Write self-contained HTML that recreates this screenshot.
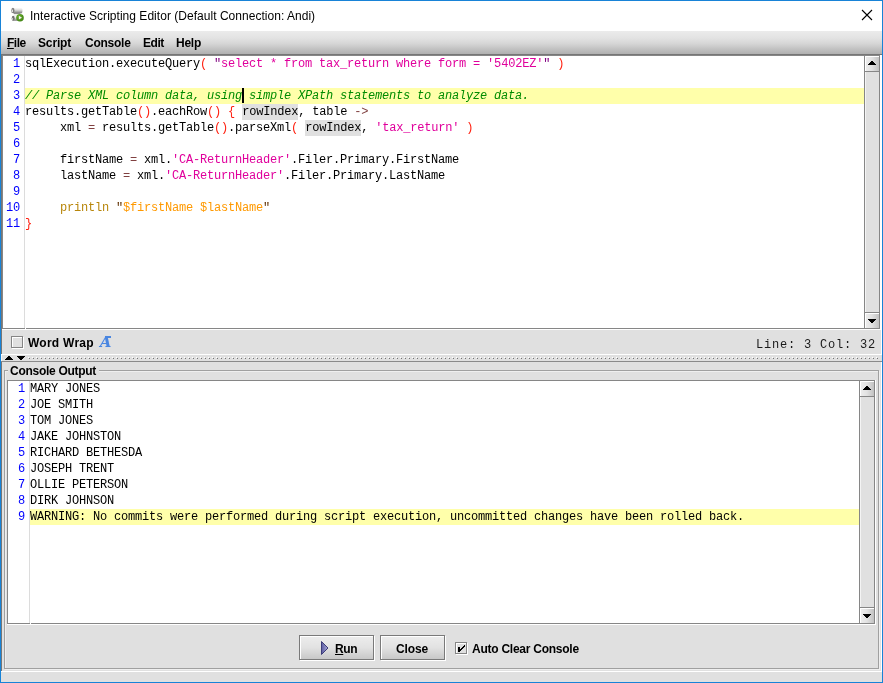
<!DOCTYPE html>
<html>
<head>
<meta charset="utf-8">
<title>Interactive Scripting Editor</title>
<style>
html,body{margin:0;padding:0;}
body{width:883px;height:683px;overflow:hidden;background:#e0e0e0;position:relative;
  font-family:"Liberation Sans",sans-serif;font-size:12px;color:#000;}
.abs{position:absolute;}
#win{position:absolute;left:0;top:0;width:881px;height:681px;border:1px solid #1883d7;background:#e0e0e0;}
#root{position:absolute;left:0;top:0;width:883px;height:683px;will-change:transform;}
#titlebar{left:1px;top:1px;width:881px;height:30px;background:#fff;}
#title{left:30px;top:8px;font-size:12px;line-height:16px;white-space:nowrap;color:#000;letter-spacing:0.03px;}
#menubar{left:1px;top:31px;width:881px;height:23px;background:linear-gradient(#ebebeb 0%,#e3e3e3 30%,#d6d6d6 55%,#c2c2c2 78%,#b0b0b0 100%);}
.lbl{font-weight:bold;font-size:12px;line-height:15px;white-space:nowrap;}
.mono{font-family:"Liberation Mono",monospace;font-size:12px;letter-spacing:-0.2px;line-height:16px;white-space:pre;}
.ln{color:#0000ff;text-align:right;}
.hl{background:#ffffaa;}
.p{color:#ff2010;}
.s{color:#e0009c;}
.q{color:#800080;}
.s2{color:#e0009c;}
.c{color:#008c00;font-style:italic;}
.o{color:#804040;}
.k{color:#b8860b;}
.g{color:#ff9900;}
.gq{color:#603000;}
.m{background:#e0e0e0;display:inline-block;height:16px;line-height:16px;vertical-align:top;}
.btn{border:1px solid #7a7a7a;box-sizing:border-box;background:linear-gradient(#ededed 0%,#e2e2e2 50%,#c8c8c8 100%);box-shadow:inset 1px 1px 0 #fff, 1px 1px 0 #fff;}
.cb{box-sizing:border-box;width:12px;height:12px;border:1px solid #858585;background:#e0e0e0;box-shadow:inset 1px 1px 0 #fff, 1px 1px 0 #fff;}
</style>
</head>
<body>
<div id="win"></div>
<div id="root">
  <!-- title bar -->
  <div id="titlebar" class="abs"></div>
  <svg class="abs" style="left:6px;top:4px" width="24" height="22" viewBox="6 4 24 22">
    <defs>
      <linearGradient id="sg" x1="0" x2="0" y1="0" y2="1"><stop offset="0" stop-color="#fdfdfd"/><stop offset="0.4" stop-color="#dcdcdc"/><stop offset="1" stop-color="#787878"/></linearGradient>
      <radialGradient id="gg" cx="0.4" cy="0.35" r="0.7"><stop offset="0" stop-color="#6cb030"/><stop offset="1" stop-color="#3f8212"/></radialGradient>
    </defs>
    <rect x="12.2" y="7.8" width="10.2" height="5.6" rx="1.6" fill="url(#sg)"/>
    <ellipse cx="12.9" cy="10.4" rx="1.6" ry="2.7" fill="#7e7e7e"/>
    <ellipse cx="12.4" cy="10.9" rx="0.6" ry="1.3" fill="#e8e8e8"/>
    <rect x="14" y="12.4" width="6" height="1.6" fill="#8e8e8e"/>
    <rect x="14" y="14" width="6" height="3" fill="#efefef"/>
    <rect x="11.8" y="16.2" width="6.4" height="4.6" rx="1.5" fill="url(#sg)"/>
    <ellipse cx="13.2" cy="18.2" rx="1.4" ry="2.4" fill="#707070"/>
    <ellipse cx="12.6" cy="18.9" rx="0.5" ry="1.1" fill="#e0e0e0"/>
    <circle cx="20" cy="17.7" r="3.8" fill="url(#gg)"/>
    <path d="M18.9 15.8 L22 17.7 L18.9 19.6 Z" fill="#f4f0fa"/>
  </svg>
  <div id="title" class="abs">Interactive Scripting Editor (Default Connection: Andi)</div>
  <svg class="abs" style="left:861px;top:9px" width="12" height="12" viewBox="0 0 12 12"><path d="M1 1 L11 11 M11 1 L1 11" stroke="#000" stroke-width="1.1" fill="none"/></svg>

  <!-- menu bar -->
  <div id="menubar" class="abs"></div>
  <div class="abs lbl" style="left:7px;top:36px;letter-spacing:-0.5px"><u>F</u>ile</div>
  <div class="abs lbl" style="left:38px;top:36px;letter-spacing:-0.15px">Script</div>
  <div class="abs lbl" style="left:85px;top:36px;letter-spacing:-0.25px">Console</div>
  <div class="abs lbl" style="left:143px;top:36px;letter-spacing:-0.45px">Edit</div>
  <div class="abs lbl" style="left:176px;top:36px;letter-spacing:-0.25px">Help</div>

  <!-- content bevel -->
  <div class="abs" style="left:1px;top:54px;width:881px;height:1px;background:#767676;"></div>
  <div class="abs" style="left:1px;top:54px;width:1px;height:617px;background:#767676;"></div>
  <div class="abs" style="left:881px;top:55px;width:1px;height:617px;background:#fff;"></div>
  <div class="abs" style="left:1px;top:671px;width:881px;height:1px;background:#fff;"></div>
  <!-- editor -->
  <div class="abs" style="left:2px;top:55px;width:879px;height:275px;background:#fff;"></div>
  <div class="abs" style="left:2px;top:55px;width:878px;height:274px;background:#868686;"></div>
  <div class="abs" style="left:3px;top:56px;width:861px;height:272px;background:#fff;"></div>
  <div class="abs" style="left:24px;top:56px;width:1px;height:272px;background:#dcdcdc;"></div>
  <div class="abs" style="left:25px;top:88px;width:839px;height:16px;background:#ffffaa;"></div>
  <div class="abs mono ln" style="left:3px;top:56px;width:17px">1</div>
  <div class="abs mono" style="left:25px;top:56px">sqlExecution.executeQuery<span class="p">(</span> <span class="q">"</span><span class="s">select * from tax_return where form = '5402EZ'</span><span class="q">"</span> <span class="p">)</span></div>
  <div class="abs mono ln" style="left:3px;top:72px;width:17px">2</div>
  <div class="abs mono ln" style="left:3px;top:88px;width:17px">3</div>
  <div class="abs mono" style="left:25px;top:88px"><span class="c">// Parse XML column data, using simple XPath statements to analyze data.</span></div>
  <div class="abs mono ln" style="left:3px;top:104px;width:17px">4</div>
  <div class="abs mono" style="left:25px;top:104px">results.getTable<span class="p">()</span>.eachRow<span class="p">()</span> <span class="p">{</span> <span class="m">rowIndex</span>, table <span class="o">-&gt;</span></div>
  <div class="abs mono ln" style="left:3px;top:120px;width:17px">5</div>
  <div class="abs mono" style="left:25px;top:120px">     xml <span class="o">=</span> results.getTable<span class="p">()</span>.parseXml<span class="p">(</span> <span class="m">rowIndex</span>, <span class="s">'tax_return'</span> <span class="p">)</span></div>
  <div class="abs mono ln" style="left:3px;top:136px;width:17px">6</div>
  <div class="abs mono ln" style="left:3px;top:152px;width:17px">7</div>
  <div class="abs mono" style="left:25px;top:152px">     firstName <span class="o">=</span> xml.<span class="s2">'CA-ReturnHeader'</span>.Filer.Primary.FirstName</div>
  <div class="abs mono ln" style="left:3px;top:168px;width:17px">8</div>
  <div class="abs mono" style="left:25px;top:168px">     lastName <span class="o">=</span> xml.<span class="s2">'CA-ReturnHeader'</span>.Filer.Primary.LastName</div>
  <div class="abs mono ln" style="left:3px;top:184px;width:17px">9</div>
  <div class="abs mono ln" style="left:3px;top:200px;width:17px">10</div>
  <div class="abs mono" style="left:25px;top:200px">     <span class="k">println</span> <span class="gq">"</span><span class="g">$firstName $lastName</span><span class="gq">"</span></div>
  <div class="abs mono ln" style="left:3px;top:216px;width:17px">11</div>
  <div class="abs mono" style="left:25px;top:216px"><span class="p">}</span></div>
  <div class="abs" style="left:242px;top:88px;width:2px;height:15px;background:#000;"></div>
  <div class="abs" style="left:25px;top:328px;width:1px;height:1px;background:#fff;"></div>
  <div class="abs" style="left:864px;top:56px;width:1px;height:272px;background:#868686;"></div>
  <div class="abs" style="left:879px;top:56px;width:1px;height:272px;background:#868686;"></div>
  <div class="abs" style="left:865px;top:56px;width:14px;height:272px;background:#e0e0e0;"></div>
  <div class="abs" style="left:865px;top:56px;width:1px;height:272px;background:#f4f4f4;"></div>
  <div class="abs" style="left:865px;top:56px;width:14px;height:15px;background:#fff;"></div>
  <div class="abs" style="left:866px;top:57px;width:13px;height:14px;background:linear-gradient(90deg,#ececec 0%,#e2e2e2 45%,#c2c2c2 100%);"></div>
  <div class="abs" style="left:865px;top:71px;width:14px;height:1px;background:#868686;"></div>
  <svg class="abs" style="left:868px;top:61px" width="8" height="4" viewBox="0 0 8 4" shape-rendering="crispEdges"><path d="M3 0h2v1h1v1h1v1h1v1h-8v-1h1v-1h1v-1h1z" fill="#000"/></svg>
  <div class="abs" style="left:865px;top:312px;width:14px;height:1px;background:#868686;"></div>
  <div class="abs" style="left:865px;top:313px;width:14px;height:15px;background:#fff;"></div>
  <div class="abs" style="left:866px;top:314px;width:13px;height:14px;background:linear-gradient(90deg,#ececec 0%,#e2e2e2 45%,#c2c2c2 100%);"></div>
  <svg class="abs" style="left:868px;top:319px" width="8" height="4" viewBox="0 0 8 4" shape-rendering="crispEdges"><path d="M0 0h8v1h-1v1h-1v1h-1v1h-2v-1h-1v-1h-1v-1h-1z" fill="#000"/></svg>
  <!-- word wrap panel -->
  <div class="abs cb" style="left:11px;top:336px"></div>
  <div class="abs lbl" style="left:28px;top:336px;letter-spacing:0.25px">Word Wrap</div>
  <div class="abs" style="left:100px;top:333px;font-family:'DejaVu Serif',serif;font-style:italic;font-weight:bold;font-size:14.5px;line-height:18px;color:#4a86e0;text-shadow:0 0 1px #a8c4f0">A</div>
  <div class="abs" style="left:105px;top:336px;width:6px;height:2px;background:#4a86e0;"></div>
  <div class="abs" style="left:756px;top:337px;font-family:'Liberation Mono',monospace;font-size:12px;letter-spacing:0.8px;line-height:16px;white-space:pre;color:#1a1a1a">Line: 3 Col: 32</div>
  <!-- divider -->
  <div class="abs" style="left:1px;top:354px;width:881px;height:1px;background:#fff;"></div>
  <div class="abs" style="left:1px;top:355px;width:881px;height:6px;background:#e0e0e0;"></div>
  <div class="abs" style="left:1px;top:355px;width:1px;height:6px;background:#f6f6f6;"></div>
  <div class="abs" style="left:1px;top:361px;width:881px;height:1px;background:#8a8a8a;"></div>
  <svg class="abs" style="left:5px;top:356px" width="8" height="4" viewBox="0 0 8 4" shape-rendering="crispEdges"><path d="M3 0h2v1h1v1h1v1h1v1h-8v-1h1v-1h1v-1h1z" fill="#000"/></svg>
  <svg class="abs" style="left:17px;top:356px" width="8" height="4" viewBox="0 0 8 4" shape-rendering="crispEdges"><path d="M0 0h8v1h-1v1h-1v1h-1v1h-2v-1h-1v-1h-1v-1h-1z" fill="#000"/></svg>
  <div class="abs" style="left:29px;top:358px;width:850px;height:1px;background:repeating-linear-gradient(90deg,#747474 0,#747474 1px,transparent 1px,transparent 4px)"></div>
  <div class="abs" style="left:28px;top:357px;width:850px;height:1px;background:repeating-linear-gradient(90deg,#fff 0,#fff 1px,transparent 1px,transparent 4px)"></div>
  <!-- console group -->
  <div class="abs" style="left:5px;top:371px;width:873px;height:297px;border:1px solid #efefef"></div>
  <div class="abs" style="left:4px;top:370px;width:873px;height:297px;border:1px solid #a0a0a0"></div>
  <div class="abs" style="left:8px;top:368px;width:91px;height:6px;background:#e0e0e0;"></div>
  <div class="abs lbl" style="left:10px;top:364px;letter-spacing:-0.28px">Console Output</div>
  <div class="abs" style="left:7px;top:380px;width:869px;height:245px;background:#fff;"></div>
  <div class="abs" style="left:7px;top:380px;width:868px;height:244px;background:#868686;"></div>
  <div class="abs" style="left:8px;top:381px;width:851px;height:242px;background:#fff;"></div>
  <div class="abs" style="left:29px;top:381px;width:1px;height:242px;background:#dcdcdc;"></div>
  <div class="abs" style="left:30px;top:509px;width:829px;height:16px;background:#ffffaa;"></div>
  <div class="abs mono ln" style="left:8px;top:381px;width:17px">1</div>
  <div class="abs mono" style="left:30px;top:381px">MARY JONES</div>
  <div class="abs mono ln" style="left:8px;top:397px;width:17px">2</div>
  <div class="abs mono" style="left:30px;top:397px">JOE SMITH</div>
  <div class="abs mono ln" style="left:8px;top:413px;width:17px">3</div>
  <div class="abs mono" style="left:30px;top:413px">TOM JONES</div>
  <div class="abs mono ln" style="left:8px;top:429px;width:17px">4</div>
  <div class="abs mono" style="left:30px;top:429px">JAKE JOHNSTON</div>
  <div class="abs mono ln" style="left:8px;top:445px;width:17px">5</div>
  <div class="abs mono" style="left:30px;top:445px">RICHARD BETHESDA</div>
  <div class="abs mono ln" style="left:8px;top:461px;width:17px">6</div>
  <div class="abs mono" style="left:30px;top:461px">JOSEPH TRENT</div>
  <div class="abs mono ln" style="left:8px;top:477px;width:17px">7</div>
  <div class="abs mono" style="left:30px;top:477px">OLLIE PETERSON</div>
  <div class="abs mono ln" style="left:8px;top:493px;width:17px">8</div>
  <div class="abs mono" style="left:30px;top:493px">DIRK JOHNSON</div>
  <div class="abs mono ln" style="left:8px;top:509px;width:17px">9</div>
  <div class="abs mono" style="left:30px;top:509px">WARNING: No commits were performed during script execution, uncommitted changes have been rolled back.</div>
  <div class="abs" style="left:30px;top:623px;width:1px;height:1px;background:#fff;"></div>
  <div class="abs" style="left:859px;top:381px;width:1px;height:242px;background:#868686;"></div>
  <div class="abs" style="left:874px;top:381px;width:1px;height:242px;background:#868686;"></div>
  <div class="abs" style="left:860px;top:381px;width:14px;height:242px;background:#e0e0e0;"></div>
  <div class="abs" style="left:860px;top:381px;width:1px;height:242px;background:#f4f4f4;"></div>
  <div class="abs" style="left:860px;top:381px;width:14px;height:15px;background:#fff;"></div>
  <div class="abs" style="left:861px;top:382px;width:13px;height:14px;background:linear-gradient(90deg,#ececec 0%,#e2e2e2 45%,#c2c2c2 100%);"></div>
  <div class="abs" style="left:860px;top:396px;width:14px;height:1px;background:#868686;"></div>
  <svg class="abs" style="left:863px;top:386px" width="8" height="4" viewBox="0 0 8 4" shape-rendering="crispEdges"><path d="M3 0h2v1h1v1h1v1h1v1h-8v-1h1v-1h1v-1h1z" fill="#000"/></svg>
  <div class="abs" style="left:860px;top:607px;width:14px;height:1px;background:#868686;"></div>
  <div class="abs" style="left:860px;top:608px;width:14px;height:15px;background:#fff;"></div>
  <div class="abs" style="left:861px;top:609px;width:13px;height:14px;background:linear-gradient(90deg,#ececec 0%,#e2e2e2 45%,#c2c2c2 100%);"></div>
  <svg class="abs" style="left:863px;top:614px" width="8" height="4" viewBox="0 0 8 4" shape-rendering="crispEdges"><path d="M0 0h8v1h-1v1h-1v1h-1v1h-2v-1h-1v-1h-1v-1h-1z" fill="#000"/></svg>
  <!-- buttons -->
  <div class="abs btn" style="left:299px;top:635px;width:75px;height:25px"></div>
  <svg class="abs" style="left:320px;top:640px" width="10" height="16" viewBox="0 0 10 16"><defs><linearGradient id="rg" x1="0" x2="1" y1="0" y2="0"><stop offset="0" stop-color="#5a5aa0"/><stop offset="1" stop-color="#a8a8d8"/></linearGradient></defs><path d="M1.5 1.5 L8 8 L1.5 14.5 Z" fill="url(#rg)" stroke="#3c3c78" stroke-width="1"/></svg>
  <div class="abs lbl" style="left:335px;top:642px;letter-spacing:-0.4px"><u>R</u>un</div>
  <div class="abs btn" style="left:380px;top:635px;width:65px;height:25px"></div>
  <div class="abs lbl" style="left:396px;top:642px;letter-spacing:-0.1px">Close</div>
  <div class="abs cb" style="left:455px;top:642px"></div>
  <svg class="abs" style="left:457px;top:644px" width="9" height="9" viewBox="0 0 9 9" shape-rendering="crispEdges"><path d="M1 3h1v1h-1z M2 3h1v1h-1z M1 4h1v1h-1z M2 4h1v1h-1z M1 5h1v1h-1z M2 5h1v1h-1z M1 6h1v1h-1z M2 6h1v1h-1z M1 7h1v1h-1z M2 7h1v1h-1z M7 1h1v1h-1z M6 2h1v1h-1z M5 3h1v1h-1z M4 4h1v1h-1z M3 5h1v1h-1z M7 2h1v1h-1z M6 3h1v1h-1z M5 4h1v1h-1z M4 5h1v1h-1z M3 6h1v1h-1z" fill="#000"/></svg>
  <div class="abs lbl" style="left:472px;top:642px;letter-spacing:-0.25px">Auto Clear Console</div>
</div>
</body>
</html>
